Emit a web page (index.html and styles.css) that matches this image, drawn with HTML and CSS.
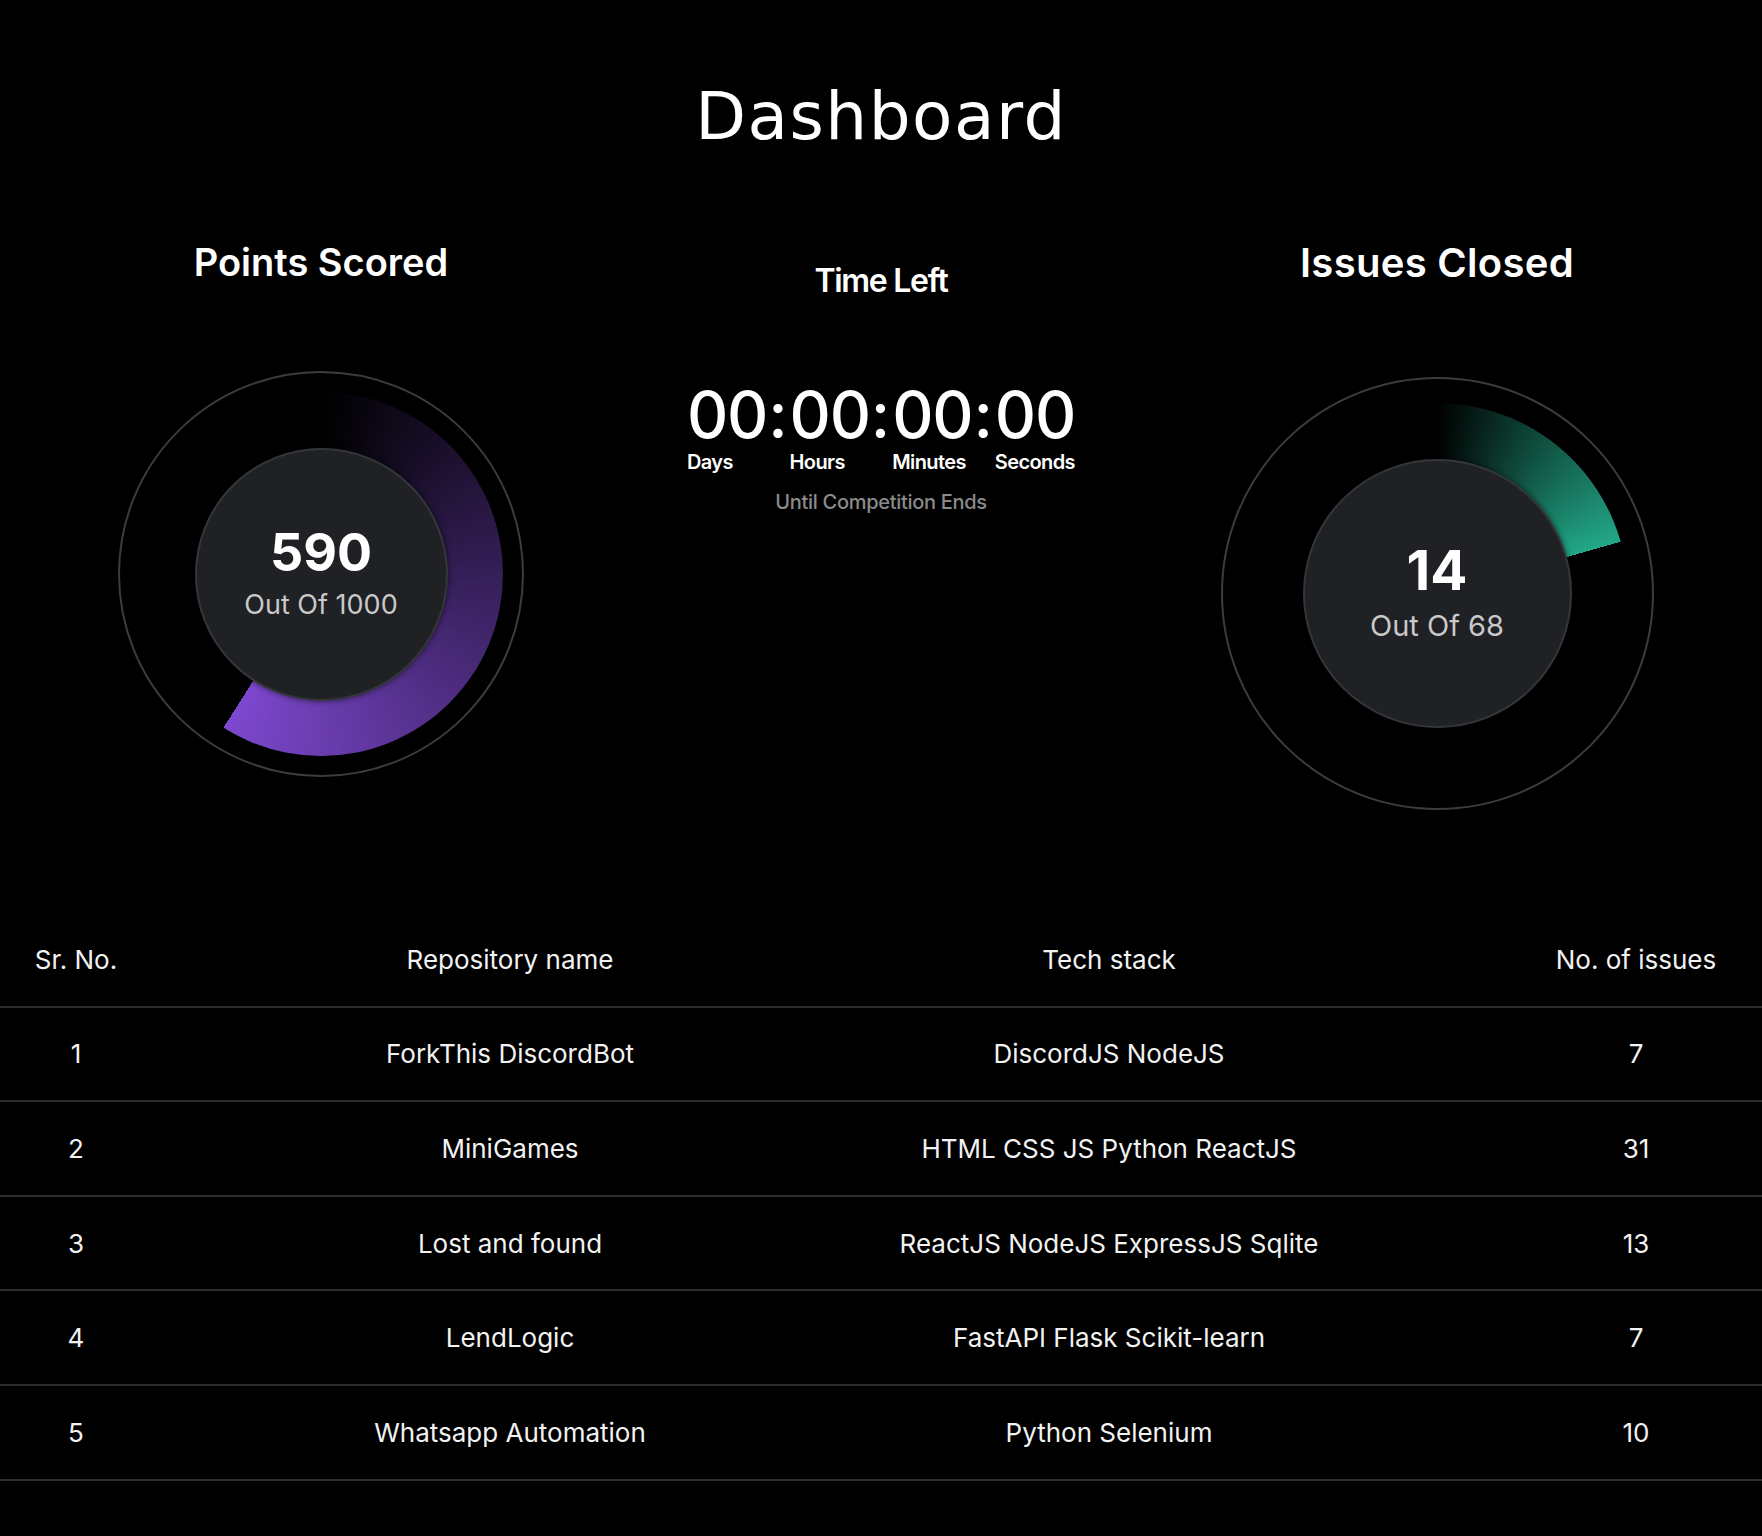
FILE: index.html
```html
<!DOCTYPE html>
<html lang="en">
<head>
<meta charset="utf-8">
<title>Dashboard</title>
<link rel="stylesheet" href="styles.css">
</head>
<body>
<main class="page">
  <h1 class="page-title">Dashboard</h1>

  <section class="stats">
    <div class="stat stat--points">
      <h2 class="stat-title">Points Scored</h2>
      <div class="gauge gauge--points" style="--deg:212.4deg">
        <div class="gauge-track">
          <div class="gauge-core">
            <span class="gauge-value">590</span>
            <span class="gauge-sub">Out Of 1000</span>
          </div>
        </div>
      </div>
    </div>

    <div class="stat stat--timer">
      <h2 class="timer-title">Time Left</h2>
      <div class="countdown">
        <div class="unit"><span class="num">00</span><span class="lbl">Days</span></div>
        <span class="sep">:</span>
        <div class="unit"><span class="num">00</span><span class="lbl">Hours</span></div>
        <span class="sep">:</span>
        <div class="unit"><span class="num">00</span><span class="lbl">Minutes</span></div>
        <span class="sep">:</span>
        <div class="unit"><span class="num">00</span><span class="lbl">Seconds</span></div>
      </div>
      <p class="timer-note">Until Competition Ends</p>
    </div>

    <div class="stat stat--issues">
      <h2 class="stat-title stat-title--lg">Issues Closed</h2>
      <div class="gauge gauge--issues" style="--deg:74.1deg">
        <div class="gauge-track">
          <div class="gauge-core">
            <span class="gauge-value">14</span>
            <span class="gauge-sub">Out Of 68</span>
          </div>
        </div>
      </div>
    </div>
  </section>

  <section class="repo-table">
    <div class="row row--head">
      <div class="cell">Sr. No.</div>
      <div class="cell">Repository name</div>
      <div class="cell">Tech stack</div>
      <div class="cell cell--count">No. of issues</div>
    </div>
    <div class="row">
      <div class="cell">1</div>
      <div class="cell">ForkThis DiscordBot</div>
      <div class="cell">DiscordJS NodeJS</div>
      <div class="cell cell--count">7</div>
    </div>
    <div class="row">
      <div class="cell">2</div>
      <div class="cell">MiniGames</div>
      <div class="cell">HTML CSS JS Python ReactJS</div>
      <div class="cell cell--count">31</div>
    </div>
    <div class="row">
      <div class="cell">3</div>
      <div class="cell">Lost and found</div>
      <div class="cell">ReactJS NodeJS ExpressJS Sqlite</div>
      <div class="cell cell--count">13</div>
    </div>
    <div class="row">
      <div class="cell">4</div>
      <div class="cell">LendLogic</div>
      <div class="cell">FastAPI Flask Scikit-learn</div>
      <div class="cell cell--count">7</div>
    </div>
    <div class="row">
      <div class="cell">5</div>
      <div class="cell">Whatsapp Automation</div>
      <div class="cell">Python Selenium</div>
      <div class="cell cell--count">10</div>
    </div>
  </section>
</main>
</body>
</html>
```

FILE: styles.css
```css
* { box-sizing: border-box; }

html, body {
  margin: 0;
  padding: 0;
  background: #000;
  color: #fff;
}

body {
  font-family: Inter, "Noto Sans", sans-serif;
  min-height: 1536px;
}

.page-title {
  margin: 0;
  padding-top: 84px;
  font-family: "DejaVu Sans", sans-serif;
  font-weight: normal;
  font-size: 66px;
  line-height: 66px;
  letter-spacing: 1.5px;
  text-align: center;
  color: #fff;
}

/* ---------- stats row ---------- */
.stats {
  margin-top: 86px;
  display: flex;
  justify-content: center;
  align-items: flex-start;
  gap: 76px;
}

.stat {
  width: 480px;
  display: flex;
  flex-direction: column;
  align-items: center;
}

.stat--points {
  padding-right: 8px;
}

.stat-title {
  margin: 0;
  padding-top: 3px;
  font-size: 38px;
  line-height: 46px;
  font-weight: 600;
  letter-spacing: 0;
  color: #fff;
}

.stat-title--lg {
  font-size: 40px;
  line-height: 48px;
  letter-spacing: 0.3px;
}

/* ---------- gauges ---------- */
.gauge {
  margin-top: 86px;
  width: 406px;
  height: 406px;
  border-radius: 50%;
  border: 2px solid #3c3c3c;
  display: grid;
  place-items: center;
}

.gauge-track {
  width: 364px;
  height: 364px;
  border-radius: 50%;
  display: grid;
  place-items: center;
}

.gauge--points .gauge-track {
  background: conic-gradient(from 0deg,
    rgba(125, 72, 207, 0) 0deg,
    #7d48cf var(--deg),
    transparent var(--deg));
}

.gauge--issues {
  margin-top: 90px;
  width: 433px;
  height: 433px;
}

.gauge--issues .gauge-track {
  width: 382px;
  height: 382px;
  background: conic-gradient(from 0deg,
    rgba(34, 168, 136, 0) 0deg,
    #22a888 var(--deg),
    transparent var(--deg));
}

.gauge-core {
  width: 253px;
  height: 253px;
  padding-bottom: 2px;
  border-radius: 50%;
  background: #1f2124;
  border: 2px solid #34373a;
  box-shadow: 0 0 6px rgba(0, 0, 0, 0.6);
  display: flex;
  flex-direction: column;
  align-items: center;
  justify-content: center;
  gap: 12px;
}

.gauge--issues .gauge-core {
  width: 269px;
  height: 269px;
  padding-bottom: 4px;
  gap: 13px;
}

.gauge-value {
  font-size: 52px;
  line-height: 52px;
  font-weight: 700;
  color: #fff;
}

.gauge-sub {
  font-size: 27px;
  line-height: 28px;
  font-weight: 400;
  color: #c9c9c9;
}

.gauge--issues .gauge-value {
  font-size: 55px;
  line-height: 55px;
}

.gauge--issues .gauge-sub {
  font-size: 29px;
  line-height: 29px;
}

/* ---------- countdown ---------- */
.timer-title {
  margin: 29px 0 0;
  font-size: 32px;
  line-height: 32px;
  font-weight: 600;
  letter-spacing: -1.3px;
  color: #fff;
}

.countdown {
  margin-top: 86px;
  display: flex;
  align-items: flex-start;
  justify-content: center;
}

.unit {
  display: flex;
  flex-direction: column;
  align-items: flex-start;
}

.num,
.sep {
  font-size: 64px;
  line-height: 64px;
  font-weight: 500;
  color: #fff;
}

.num {
  letter-spacing: -1.2px;
}

.sep {
  padding: 0 2px 0 1px;
}

.lbl {
  margin-top: 5px;
  font-size: 20px;
  line-height: 20px;
  font-weight: 600;
  letter-spacing: -0.6px;
  color: #fff;
}

.timer-note {
  margin: 20px 0 0;
  font-size: 20px;
  line-height: 20px;
  font-weight: 500;
  letter-spacing: -0.3px;
  color: #8b8b8b;
}

/* ---------- table ---------- */
.repo-table {
  margin-top: 103px;
  width: 100%;
}

.row {
  display: grid;
  grid-template-columns: 152px 716px 482px 1fr;
  height: 94.6px;
  border-bottom: 2px solid #2c2c2c;
  align-items: center;
}

.cell {
  text-align: center;
  font-size: 26px;
  font-weight: 400;
  color: #f2f2f2;
}

.cell--count {
  padding-left: 160px;
}
```
